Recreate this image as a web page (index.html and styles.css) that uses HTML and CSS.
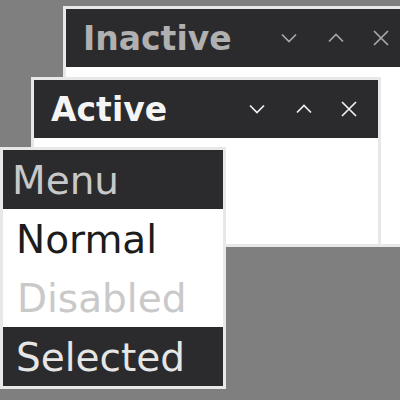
FILE: index.html
```html
<!DOCTYPE html>
<html lang="en">
<head>
<meta charset="UTF-8">
<title>Theme preview</title>
<link rel="stylesheet" href="styles.css">
</head>
<body>
<div class="desk">
    <div class="win inactive">
        <div class="bar">
            <span class="title">Inactive</span>
            <div class="btns">
                <span class="btn"><svg width="16" height="16" viewBox="0 0 16 16"><path d="M1 4.5L8 11.5L15 4.5"/></svg></span>
                <span class="btn"><svg width="16" height="16" viewBox="0 0 16 16"><path d="M1 11.5L8 4.5L15 11.5"/></svg></span>
                <span class="btn"><svg width="16" height="16" viewBox="0 0 16 16"><path d="M1 1L15 15M15 1L1 15"/></svg></span>
            </div>
        </div>
    </div>
    <div class="win active">
        <div class="bar">
            <span class="title">Active</span>
            <div class="btns">
                <span class="btn"><svg width="16" height="16" viewBox="0 0 16 16"><path d="M1 4.5L8 11.5L15 4.5"/></svg></span>
                <span class="btn"><svg width="16" height="16" viewBox="0 0 16 16"><path d="M1 11.5L8 4.5L15 11.5"/></svg></span>
                <span class="btn"><svg width="16" height="16" viewBox="0 0 16 16"><path d="M1 1L15 15M15 1L1 15"/></svg></span>
            </div>
        </div>
    </div>
    <ul class="menu">
        <li class="head">Menu</li>
        <li>Normal</li>
        <li class="disabled">Disabled</li>
        <li class="sel">Selected</li>
    </ul>
</div>
</body>
</html>
```

FILE: styles.css
```css
*{box-sizing:border-box}
body{margin:0;background:#7f7f7f;font-family:"DejaVu Sans",sans-serif}
.desk{position:relative;width:400px;height:400px;overflow:hidden}

/* Windows */
.win{position:absolute;width:350px;border:3px solid #e8e8e8;background:#fff}
.win.inactive{left:63px;top:6px;height:241px}
.win.active{left:31px;top:77px;height:170px}
.bar{display:flex;align-items:center;height:58px;padding:0 7px 0 17px;background:#2b2b2d;font-size:33px;font-weight:bold}
.btns{display:flex;margin-left:auto}
.btn{display:flex;justify-content:center;width:45px}
.btn:first-child{margin-right:2px}
.btn svg{fill:none;stroke-width:1.7}
.inactive .title{color:#b0b0b0}
.inactive .btn svg{stroke:#a8a8a8}
.active .title{color:#f4f4f4}
.active .btn svg{stroke:#f0f0f0}

/* Menu */
.menu{position:absolute;left:0;top:147px;width:226px;margin:0;padding:0;list-style:none;border:3px solid #e8e8e8;background:#fff;font-size:39px}
.menu li{height:59px;line-height:61px;padding-left:13px;color:#1c1c1c}
.menu .head{padding-left:9px;background:#2b2b2d;color:#c8c8c8}
.menu .disabled{padding-left:14px;color:#c9c9c9}
.menu .sel{background:#2b2b2d;color:#e6e6e6}
```
